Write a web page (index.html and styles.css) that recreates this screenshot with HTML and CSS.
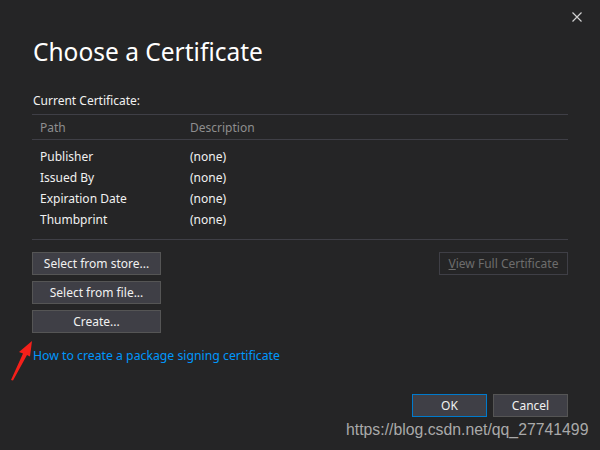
FILE: index.html
```html
<!DOCTYPE html>
<html>
<head>
<meta charset="utf-8">
<link rel="stylesheet" href="styles.css">
</head>
<body>
<div class="dialog">
  <div class="topbar">
    <span class="close"><svg width="10" height="10" viewBox="0 0 10 10"><path d="M0.5 0.5 L9.5 9.5 M9.5 0.5 L0.5 9.5" stroke="#d0d0d0" stroke-width="1.2" fill="none"/></svg></span>
  </div>
  <h1 class="title">Choose a Certificate</h1>
  <div class="label">Current Certificate:</div>
  <div class="table">
    <div class="thead">
      <span class="col1">Path</span>
      <span class="col2">Description</span>
    </div>
    <div class="tbody">
      <div class="row"><span class="col1">Publisher</span><span class="col2">(none)</span></div>
      <div class="row"><span class="col1">Issued By</span><span class="col2">(none)</span></div>
      <div class="row"><span class="col1">Expiration Date</span><span class="col2">(none)</span></div>
      <div class="row"><span class="col1">Thumbprint</span><span class="col2">(none)</span></div>
    </div>
  </div>
  <div class="actions">
    <div class="stack">
      <button class="btn">Select from store...</button>
      <button class="btn">Select from file...</button>
      <button class="btn">Create...</button>
    </div>
    <button class="btn disabled"><u>V</u>iew Full Certificate</button>
  </div>
  <a class="link">How to create a package signing certificate</a>
  <div class="footer">
    <button class="btn small primary">OK</button>
    <button class="btn small">Cancel</button>
  </div>
  <svg class="arrow" width="40" height="50" viewBox="0 0 40 50"><polygon points="32,1 19,12 23,13.5 11,40 13,40.5 27,15 30,16.5" fill="#f5201a"/></svg>
  <div class="watermark">https://blog.csdn.net/qq_27741499</div>
</div>
</body>
</html>
```
FILE: styles.css
```css
html, body {
  margin: 0;
  padding: 0;
  background: #252526;
}
.dialog {
  position: relative;
  width: 600px;
  height: 450px;
  box-sizing: border-box;
  padding: 0 32px;
  font-family: "Noto Sans", "Open Sans", sans-serif;
  font-size: 12px;
  color: #f1f1f1;
  overflow: hidden;
}
.topbar {
  display: flex;
  justify-content: flex-end;
  height: 22px;
  padding-top: 12px;
  margin-right: -14px;
  box-sizing: border-box;
}
.close {
  display: block;
  width: 10px;
  height: 10px;
  line-height: 0;
}
.title {
  margin: 13px 0 0 1px;
  font-size: 24.5px;
  font-weight: normal;
  line-height: 34px;
  color: #ffffff;
}
.label {
  margin-top: 23px;
  margin-left: 1px;
  line-height: 17px;
}
.table {
  margin-top: 5px;
}
.thead {
  display: flex;
  border-top: 1px solid #3f3f46;
  border-bottom: 1px solid #3f3f46;
  height: 24px;
  align-items: center;
  color: #8e8e8e;
}
.col1 {
  width: 150px;
  padding-left: 8px;
}
.tbody {
  padding: 6px 0 9px;
  border-bottom: 1px solid #3f3f46;
}
.row {
  display: flex;
  height: 21px;
  align-items: center;
}
.actions {
  display: flex;
  justify-content: space-between;
  align-items: flex-start;
  margin-top: 12px;
}
.stack {
  display: flex;
  flex-direction: column;
  gap: 6px;
}
.btn {
  width: 129px;
  height: 23px;
  background: #3f3f46;
  border: 1px solid #555555;
  color: #f1f1f1;
  font-family: inherit;
  font-size: 12px;
  padding: 0;
  margin: 0;
  box-sizing: border-box;
}
.btn.disabled {
  background: #252526;
  border-color: #3f3f46;
  color: #6d6d6d;
}
.btn.disabled u {
  text-decoration: underline;
}
.link {
  display: block;
  margin-top: 14px;
  margin-left: 1px;
  color: #0097fb;
  font-size: 12.25px;
  line-height: 17px;
}
.footer {
  display: flex;
  justify-content: flex-end;
  gap: 6px;
  margin-top: 30px;
}
.btn.small {
  width: 75px;
}
.btn.primary {
  border-color: #007acc;
}
.arrow {
  position: absolute;
  left: 0;
  top: 340px;
}
.watermark {
  position: absolute;
  left: 346px;
  top: 421px;
  font-family: "Liberation Sans", Arial, sans-serif;
  font-size: 15.8px;
  color: #b8b8b8;
  opacity: 0.9;
}
```
